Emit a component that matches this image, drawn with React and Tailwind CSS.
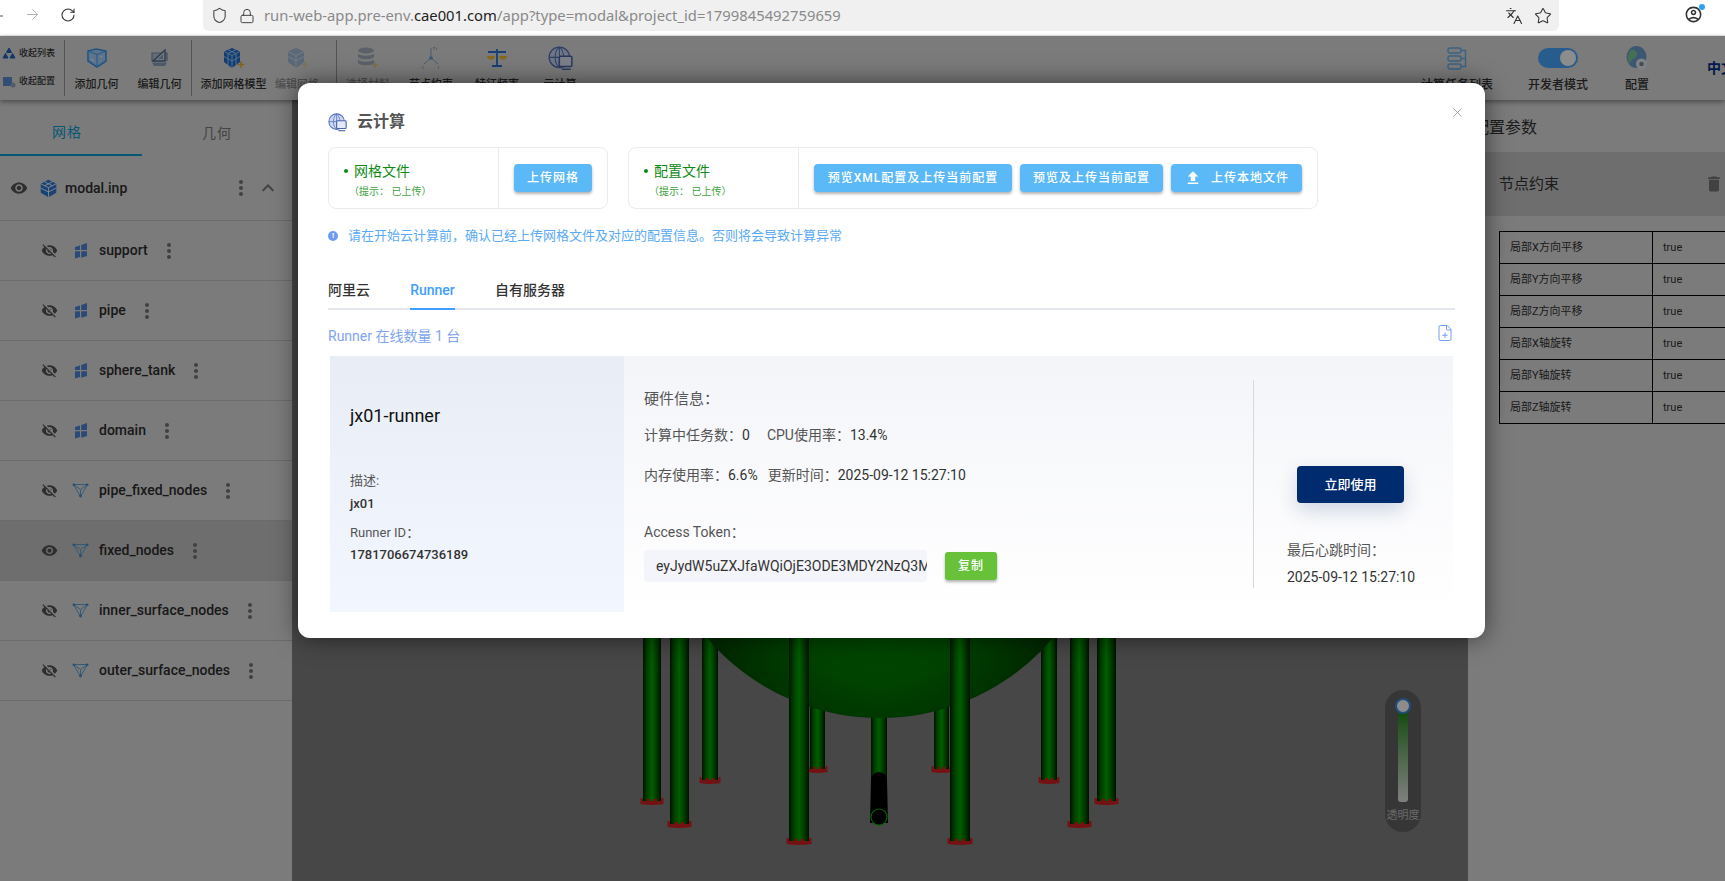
import React from 'react';
import { MdVisibility, MdVisibilityOff, MdMoreVert, MdDelete, MdExpandLess, MdFileUpload, MdOutlineAccountCircle } from 'react-icons/md';
import { ArrowRight, RotateCw, Shield, Lock, Star, Languages, X, FilePlus } from 'lucide-react';

const Pane = () => (
  <svg width="14" height="17" viewBox="0 0 14 17" className="shrink-0"><path d="M1 5 6 3.4V8H1ZM7.2 3 13 1V8H7.2ZM1 9.2H6V15L1 16.4ZM7.2 9.2H13V14L7.2 15.8Z" fill="#4f86d9" /></svg>
);
const Funnel = () => (
  <svg width="17" height="15" viewBox="0 0 17 15" className="shrink-0">
    <path d="M1.500 1.500H15.500L8.500 13.500ZM1.500 1.500 8.500 6.500 15.500 1.500M8.500 6.500V13.500" fill="none" stroke="#63a6d8" strokeWidth="1" />
    <circle cx="1.800" cy="1.800" r="1.300" fill="#4a90d0" /><circle cx="15.200" cy="1.800" r="1.300" fill="#4a90d0" /><circle cx="8.500" cy="13" r="1.400" fill="#4a90d0" />
  </svg>
);
const Cube = ({ c = '#2f78d6', size = 22 }) => (
  <svg width={size} height={size} viewBox="0 0 22 22">
    <path d="M11 1 20 5.500V16L11 21 2 16V5.500Z" fill={c} />
    <path d="M2 5.500 11 10 20 5.500M11 10V21M6.500 3.300 15.500 7.800M15.500 3.300 6.500 7.800M2 10.500 11 15 20 10.500" fill="none" stroke="#fff" strokeWidth="1" />
  </svg>
);
const Globe = ({ size = 22 }) => (
  <svg width={size} height={size} viewBox="0 0 22 22">
    <circle cx="10" cy="10" r="9" fill="#cdd8f2" stroke="#5573b8" strokeWidth="1.200" />
    <path d="M1 10H19M10 1V19M10 1C5 5 5 15 10 19M10 1C15 5 15 15 10 19" fill="none" stroke="#5573b8" strokeWidth="0.900" />
    <rect x="10" y="9" width="11" height="9" rx="1" fill="#e4e9f8" stroke="#4b66ad" strokeWidth="1.300" />
    <path d="M12 20.500H20" stroke="#4b66ad" strokeWidth="1.300" />
  </svg>
);

const ToolIcon = ({ kind }) => {
  if (kind === 'box') return (
    <svg width="20" height="20" viewBox="0 0 20 20"><path d="M1 3 9 1 19 3V13L10 19 1 13Z" fill="#a9d3fb" stroke="#3c9bf2" strokeWidth="1.600" strokeLinejoin="round" /><path d="M1 3 10 6.500 19 3M10 6.500V19" fill="none" stroke="#3c9bf2" strokeWidth="0.900" /><path d="M4 11 7 13M13 9 16 8" stroke="#eef6ff" strokeWidth="1.200" /></svg>
  );
  if (kind === 'edit') return (
    <svg width="21" height="20" viewBox="0 0 21 20"><path d="M3 13V5H18V13" fill="#b9c6d8" stroke="#7a90ad" strokeWidth="1.200" /><path d="M4 13 16 2V13Z" fill="#cfd9e6" stroke="#4e6a90" strokeWidth="1.300" /><path d="M9 11 14 6.500V11Z" fill="#8ea2bc" /><path d="M3 14.500H18L16 18H5Z" fill="#8ea2bc" /></svg>
  );
  if (kind === 'mesh') return (
    <svg width="23" height="22" viewBox="0 0 23 22"><path d="M10 1 18 4.500V15L10 21 2 15V4.500Z" fill="#1f6fd0" /><path d="M2 4.500 10 8.500 18 4.500M10 8.500V21M6 2.800 14 6.600M14 2.800 6 6.600M2 9.500 10 14 18 9.500M6 6.500V18M14 6.500V18" fill="none" stroke="#9ccdfa" strokeWidth="1" /><path d="M19 14V21M15.500 17.500H22.500" stroke="#e8b33a" strokeWidth="1.600" /></svg>
  );
  if (kind === 'meshoff') return (
    <svg width="23" height="22" viewBox="0 0 23 22" className="opacity-30"><path d="M10 1 18 4.500V15L10 21 2 15V4.500Z" fill="#1f6fd0" /><path d="M2 4.500 10 8.500 18 4.500M10 8.500V21M2 9.500 10 14 18 9.500" fill="none" stroke="#cfe6ff" strokeWidth="1" /><path d="M19 14V21M15.500 17.500H22.500" stroke="#e8b33a" strokeWidth="1.600" /></svg>
  );
  if (kind === 'db') return (
    <svg width="24" height="22" viewBox="0 0 24 22" className="opacity-50"><ellipse cx="10" cy="3.500" rx="8" ry="3" fill="#6d80a0" /><path d="M2 6.500C4 9.500 16 9.500 18 6.500V10C16 13 4 13 2 10ZM2 12.500C4 15.500 16 15.500 18 12.500V16C16 19 4 19 2 16Z" fill="#6d80a0" /><path d="M19 15V21M16 18H22" stroke="#e8b33a" strokeWidth="1.400" /></svg>
  );
  if (kind === 'fork') return (
    <svg width="22" height="24" viewBox="0 0 22 24" className="opacity-70"><path d="M11 2V12M11 12 4 18M11 12 18 18" fill="none" stroke="#6a90c0" strokeWidth="1" /><circle cx="11" cy="12" r="1.800" fill="#2f8be8" /><path d="M13 1.500H15M14 1.500V4M16.500 1.500V4M3 20V23M19 20 18 23" stroke="#778" strokeWidth="0.700" /></svg>
  );
  if (kind === 'scale') return (
    <svg width="22" height="20" viewBox="0 0 22 20"><path d="M11 1V17M6 18H16M2 4H20" fill="none" stroke="#2f72d2" strokeWidth="1.800" /><path d="M1 8H9C9 13 1 13 1 8ZM13 8H21C21 13 13 13 13 8Z" fill="#f2c230" /></svg>
  );
  if (kind === 'globe') return <Globe size={25} />;
  if (kind === 'tasks') return (
    <svg width="20" height="24" viewBox="0 0 20 24" fill="none" stroke="#6ab2ee" strokeWidth="1.400"><rect x="1" y="2" width="13" height="5" rx="2" /><rect x="1" y="10" width="13" height="5" rx="2" /><rect x="1" y="18" width="13" height="5" rx="2" /><path d="M14 4.500H18.500V20.500H14M14 12.500H18.500" /></svg>
  );
  return (
    <svg width="22" height="24" viewBox="0 0 22 24"><ellipse cx="10.500" cy="11" rx="10" ry="11" fill="#6f9ed0" /><path d="M5 4C10 3 13 8 10 11S4 14 4 18C1 14 1 8 5 4Z" fill="#7ecb9c" /><circle cx="15.500" cy="18" r="5.500" fill="#e8eef5" /><circle cx="15.500" cy="18" r="2.300" fill="#7a8aa0" /></svg>
  );
};

const Tool = ({ kind, label, w, faded, big }) => (
  <div className={`flex flex-col items-center shrink-0 ${w}`}>
    <div className="h-[28px] flex items-center justify-center"><ToolIcon kind={kind} /></div>
    <div className={`mt-[6px] leading-[14px] font-medium whitespace-nowrap ${big ? 'text-[12px]' : 'text-[11px]'} ${faded ? 'text-[#8f8f8f]' : 'text-[#333]'}`}>{label}</div>
  </div>
);

const rows = [
  { n: 'support', i: Pane }, { n: 'pipe', i: Pane }, { n: 'sphere_tank', i: Pane }, { n: 'domain', i: Pane },
  { n: 'pipe_fixed_nodes', i: Funnel }, { n: 'fixed_nodes', i: Funnel, on: true },
  { n: 'inner_surface_nodes', i: Funnel }, { n: 'outer_surface_nodes', i: Funnel },
];

const Sidebar = () => (
  <aside className="w-[292px] shrink-0 bg-[#e0e0e0] text-[14px] font-medium text-[#2e2e2e]">
    <div className="flex h-[56px] text-[14px] tracking-[1px] font-normal">
      <div className="w-[142px] flex items-center justify-center pt-[10px] pr-[8px] border-b-2 border-[#0a9ed8] text-[#0a9ed8]">网格</div>
      <div className="flex-1 flex items-center justify-center pt-[10px] text-[#7c7c7c]">几何</div>
    </div>
    <div className="h-[65px] flex items-center pl-[10px] border-b border-[#c4c4c4]">
      <MdVisibility size={18} className="text-[#555]" />
      <span className="ml-[11px]"><Cube size={19} /></span>
      <span className="ml-[7px]">modal.inp</span>
      <MdMoreVert size={24} className="ml-auto text-[#777]" />
      <MdExpandLess size={24} className="ml-[3px] mr-[12px] text-[#777]" />
    </div>
    {rows.map(r => (
      <div key={r.n} className={`h-[60px] flex items-center pl-[41px] border-b border-[#c4c4c4] ${r.on ? 'bg-[#c8c8c8]' : ''}`}>
        {r.on ? <MdVisibility size={17} className="text-[#555]" /> : <MdVisibilityOff size={17} className="text-[#555]" />}
        <span className="w-[17px] ml-[14px] flex justify-center"><r.i /></span>
        <span className="ml-[10px]">{r.n}</span>
        <MdMoreVert size={24} className="ml-[9px] text-[#777]" />
      </div>
    ))}
  </aside>
);

const legs = [
  [643, 661, 802], [702, 718, 781], [810, 825, 770], [934, 949, 770], [1041, 1057, 781], [1097, 1116, 802],
];
const front = [[670, 689, 825], [789, 809, 842], [950, 970, 842], [1070, 1089, 825]];

const Leg = ({ l, r, b, ox }) => {
  const x = l - ox, w = r - l;
  const x0 = x - 2.5, x1 = x + w + 2.5, q = (x1 - x0) / 5, top = b - 4, low = b - 1;
  return (
    <g>
      <rect x={x} y={300} width={w} height={b - 300} fill="url(#leg)" />
      <path d={`M${x0} ${top}V${b + 2}Q${(x0 + x1) / 2} ${b + 4} ${x1} ${b + 2}V${top}H${x0 + 4.5 * q}V${low}H${x0 + 3.5 * q}V${top + 1}H${x0 + 2.8 * q}V${low}H${x0 + 2.2 * q}V${top + 1}H${x0 + 1.5 * q}V${low}H${x0 + 0.5 * q}V${top}Z`} fill="#d42024" />
    </g>
  );
};

const Scene = () => {
  const ox = 292;
  return (
    <svg className="w-full h-full" viewBox="0 0 1176 781" preserveAspectRatio="none">
      <defs>
        <linearGradient id="leg" x1="0" x2="1" y1="0" y2="0">
          <stop offset="0" stopColor="#002000" /><stop offset="0.2" stopColor="#006c00" /><stop offset="0.5" stopColor="#00ac00" /><stop offset="0.8" stopColor="#006000" /><stop offset="1" stopColor="#001c00" />
        </linearGradient>
        <radialGradient id="ball" cx="0.5" cy="0.72" r="0.6">
          <stop offset="0" stopColor="#008c00" /><stop offset="0.35" stopColor="#007800" /><stop offset="0.7" stopColor="#004000" /><stop offset="1" stopColor="#001c00" />
        </radialGradient>
      </defs>
      {legs.map(([l, r, b]) => <Leg key={l} l={l} r={r} b={b - 100} ox={ox} />)}
      <rect x={871 - ox} y={500} width={16} height={180} fill="url(#leg)" />
      <path d={`M${871 - ox} 680a8 8 0 0 1 16 0l1 43h-18z`} fill="#000" />
      <circle cx={879 - ox} cy={717} r={8} fill="#000" stroke="#00b400" strokeWidth="1.200" />
      <circle cx={880 - ox} cy={391} r={227} fill="url(#ball)" />
      {front.map(([l, r, b]) => <Leg key={l} l={l} r={r} b={b - 100} ox={ox} />)}
    </svg>
  );
};

const Slider = () => (
  <div className="absolute left-[1093px] top-[590px] w-[36px] h-[142px] rounded-[18px] bg-[#636363] flex flex-col items-center">
    <div className="absolute top-[8px] w-[16px] h-[16px] rounded-full bg-[#fff] border-2 border-[#3e8be0] z-10" />
    <div className="mt-[20px] w-[10px] h-[92px] rounded-b-[3px] bg-gradient-to-b from-[#0a8a0a] to-[#e8e8e8]" />
    <div className="mt-[7px] text-[11px] leading-[14px] text-[#c0c0c0]">透明度</div>
  </div>
);

const params = ['局部X方向平移', '局部Y方向平移', '局部Z方向平移', '局部X轴旋转', '局部Y轴旋转', '局部Z轴旋转'];

const RightPanel = () => (
  <aside className="w-[257px] shrink-0 bg-[#e0e0e0] text-[#333] overflow-hidden">
    <div className="h-[52px] pl-[5px] pt-[4px] flex items-center text-[16px]">配置参数</div>
    <div className="h-[64px] bg-[#c8c8c8] pl-[31px] pr-[1px] flex items-center text-[15px]">
      节点约束
      <MdDelete size={20} className="ml-auto text-[#777]" />
    </div>
    <table className="mt-[15px] ml-[31px] w-[300px] table-fixed border-collapse text-[11px]">
      <tbody>
        {params.map(p => (
          <tr key={p} className="h-[32px]">
            <td className="w-[153px] border border-black pl-[10px] pt-[2px]">{p}</td>
            <td className="border border-black pl-[10px] pt-[2px]">true</td>
          </tr>
        ))}
      </tbody>
    </table>
  </aside>
);

const Btn = ({ children, w, icon }) => (
  <button className={`h-[28px] rounded-[4px] bg-[#5cb9f7] text-white text-[12px] font-medium tracking-[1px] flex items-center justify-center shadow-[0_2px_3px_rgba(0,0,0,0.3)] ${w}`}>
    {icon && <MdFileUpload size={18} className="mr-[9px]" />}
    {children}
  </button>
);

const FileHead = ({ t }) => (
  <div>
    <div className="text-[14px] leading-[20px] text-[#0c8a12]"><span className="inline-block w-[4px] h-[4px] rounded-full bg-[#0c8a12] mr-[6px] mb-[3px]" />{t}</div>
    <div className="mt-[4px] ml-[5px] text-[10px] leading-[14px] text-[#3f9f3f]">（提示： 已上传）</div>
  </div>
);

const Modal = () => (
  <div className="absolute left-[298px] top-[47px] w-[1187px] h-[555px] rounded-[12px] bg-white pl-[30px] pr-[30px] pt-[29px] shadow-[0_0_24px_rgba(0,0,0,0.55)] text-[#333]">
    <X size={15} strokeWidth={1.200} className="absolute left-[1152px] top-[22px] text-[#888]" />
    <div className="h-[20px] flex items-center gap-[10px]">
      <Globe size={19} />
      <span className="text-[16px] font-bold text-[#555]">云计算</span>
    </div>
    <div className="mt-[15px] flex gap-[20px]">
      <div className="w-[280px] h-[62px] rounded-[8px] border border-[#ebebeb] flex">
        <div className="w-[170px] border-r border-[#ebebeb] pl-[15px] pt-[13px]"><FileHead t="网格文件" /></div>
        <div className="flex-1 flex items-center pl-[15px]"><Btn w="w-[78px]">上传网格</Btn></div>
      </div>
      <div className="w-[690px] h-[62px] rounded-[8px] border border-[#ebebeb] flex">
        <div className="w-[170px] border-r border-[#ebebeb] pl-[15px] pt-[13px]"><FileHead t="配置文件" /></div>
        <div className="flex-1 flex items-center pl-[15px] gap-[8px]">
          <Btn w="w-[198px]">预览XML配置及上传当前配置</Btn>
          <Btn w="w-[143px]">预览及上传当前配置</Btn>
          <Btn w="w-[131px]" icon>上传本地文件</Btn>
        </div>
      </div>
    </div>
    <div className="mt-[17px] h-[20px] flex items-center text-[13px] text-[#5aaaf5]">
      <span className="w-[10px] h-[10px] rounded-full bg-[#6f9cf0] text-white text-[8px] leading-[10px] text-center font-bold mr-[10px]">!</span>
      请在开始云计算前，确认已经上传网格文件及对应的配置信息。否则将会导致计算异常
    </div>
    <div className="mt-[34px] h-[30px] border-b-2 border-[#e4e7ed] flex text-[14px] font-medium">
      <div className="w-[82px] h-[30px]">阿里云</div>
      <div className="w-[45px] h-[30px] border-b-2 border-[#409eff] text-[#409eff] text-center">Runner</div>
      <div className="ml-[40px]">自有服务器</div>
    </div>
    <div className="mt-[16px] h-[20px] flex items-center justify-between text-[14px] text-[#7fa4f0]">
      <span>Runner 在线数量 1 台</span>
      <FilePlus size={18} strokeWidth={1.300} className="mr-[1px] -mt-[6px] text-[#6f9cf0]" />
    </div>
    <div className="mt-[10px] ml-[2px] mr-[2px] h-[256px] flex bg-gradient-to-b from-[#f4f5f9] to-white text-[14px]">
      <div className="w-[294px] h-full bg-gradient-to-b from-[#e9edf5] to-[#f2f6fe] pl-[20px] text-[13px]">
        <div className="mt-[48px] h-[24px] leading-[24px] text-[18px] text-[#111]">jx01-runner</div>
        <div className="mt-[44px] leading-[18px] text-[#555]">描述:</div>
        <div className="mt-[5px] leading-[18px] font-medium">jx01</div>
        <div className="mt-[11px] leading-[18px] text-[#555]">Runner ID：</div>
        <div className="mt-[4px] leading-[18px] font-medium">1781706674736189</div>
      </div>
      <div className="w-[629px] pl-[20px] shrink-0">
        <div className="mt-[33px] h-[20px] leading-[20px] text-[15px] text-[#555]">硬件信息：</div>
        <div className="mt-[16px] h-[20px] leading-[20px] text-[#555]">计算中任务数：<span className="text-[#333]">0</span><span className="ml-[17px]">CPU使用率：</span><span className="text-[#333]">13.4%</span></div>
        <div className="mt-[20px] h-[20px] leading-[20px] text-[#555]">内存使用率：<span className="text-[#333]">6.6%</span><span className="ml-[10px]">更新时间：</span><span className="text-[#333]">2025-09-12 15:27:10</span></div>
        <div className="mt-[37px] h-[20px] leading-[20px] text-[#555]">Access Token：</div>
        <div className="mt-[8px] flex items-center">
          <div className="w-[283px] h-[32px] rounded-[4px] bg-[#f3f5fa] pl-[12px] whitespace-nowrap leading-[32px]"><div className="w-[271px] overflow-hidden">eyJydW5uZXJfaWQiOjE3ODE3MDY2NzQ3M</div></div>
          <button className="ml-[18px] w-[52px] h-[28px] rounded-[3px] bg-[#67c23a] text-white text-[12px] font-medium tracking-[1px] shadow-[0_2px_3px_rgba(0,0,0,0.3)]">复制</button>
        </div>
      </div>
      <div className="flex-1 my-[24px] border-l border-[#d8d8d8] pl-[33px]">
        <button className="ml-[10px] mt-[86px] w-[107px] h-[37px] rounded-[4px] bg-[#002b6f] text-white text-[13px] font-medium shadow-[0_8px_20px_rgba(0,43,111,0.18)]">立即使用</button>
        <div className="mt-[37px] h-[20px] leading-[20px] text-[#555]">最后心跳时间：</div>
        <div className="mt-[7px] h-[20px] leading-[20px] text-[#333] whitespace-nowrap">2025-09-12 15:27:10</div>
      </div>
    </div>
  </div>
);

export default function App() {
  return (
    <div className="w-[1725px] h-[881px] overflow-hidden font-['Roboto','Noto_Sans_CJK_SC',sans-serif] bg-white">
      <header className="h-[36px] bg-white flex items-start relative border-b border-[#e8e8e8]">
        <span className="mt-[15px] w-[3px] h-[1.500px] bg-[#aaa]" />
        <ArrowRight size={17} strokeWidth={1.300} className="ml-[21px] mt-[6px] text-[#aaa]" />
        <RotateCw size={16} strokeWidth={1.600} className="ml-[19px] mt-[7px] text-[#333]" />
        <div className="ml-[127px] w-[1356px] h-[31px] rounded-b-[6px] bg-[#f0f0f0] flex items-center pl-[8px] pr-[7px] text-[14.800px] font-['Noto_Sans',sans-serif] text-[#8a8a8a]">
          <Shield size={17} strokeWidth={1.500} className="text-[#444]" />
          <Lock size={16} strokeWidth={1.500} className="ml-[11px] text-[#444]" />
          <span className="ml-[9px] whitespace-nowrap">run-web-app.pre-env.<span className="text-[#222]">cae001.com</span>/app?type=modal&amp;project_id=1799845492759659</span>
          <Languages size={18} strokeWidth={1.500} className="ml-auto text-[#333]" />
          <Star size={18} strokeWidth={1.400} className="ml-[11px] text-[#333]" />
        </div>
        <div className="ml-[125px] mt-[5px] relative">
          <MdOutlineAccountCircle size={19} className="text-[#333]" />
          <span className="absolute -right-[2px] -top-[1px] w-[6px] h-[6px] rounded-full bg-[#2aa3f5]" />
        </div>
      </header>
      <div className="relative h-[845px]">
        <div className="h-[64px] bg-[#e0e0e0] flex items-center shadow-[0_2px_5px_rgba(0,0,0,0.4)] relative z-10">
          <div className="w-[65px] shrink-0 h-[56px] border-r border-[#999] flex flex-col justify-around pl-[2px] text-[9px] font-medium text-[#333]">
            <div className="flex items-center gap-[3px]"><svg width="14" height="13" viewBox="0 0 14 13"><path d="M7 1 9.500 5.500H4.500ZM3.500 6.500 6 11H1ZM10.500 6.500 13 11H8Z" fill="#2563b8" stroke="#2563b8" strokeLinejoin="round" /></svg>收起列表</div>
            <div className="flex items-center gap-[3px]"><svg width="14" height="14" viewBox="0 0 14 14"><rect x="1" y="2" width="9" height="9" fill="#5d8fd2" /><circle cx="11" cy="10" r="2.500" fill="#9aa8c0" /></svg>收起配置</div>
          </div>
          <div className="flex w-[127px] shrink-0 h-[56px] items-center border-r border-[#999]">
            <Tool kind="box" label="添加几何" w="w-[63px]" />
            <Tool kind="edit" label="编辑几何" w="w-[63px]" />
          </div>
          <div className="flex w-[145px] shrink-0 h-[56px] items-center border-r border-[#999] pl-[8px] gap-[8px]">
            <Tool kind="mesh" label="添加网格模型" w="w-[67px]" />
            <Tool kind="meshoff" label="编辑网格" w="w-[44px]" faded />
          </div>
          <Tool kind="db" label="选择材料" w="w-[62px]" faded />
          <Tool kind="fork" label="节点约束" w="w-[64px]" />
          <Tool kind="scale" label="特征频率" w="w-[68px]" />
          <Tool kind="globe" label="云计算" w="w-[58px]" />
          <div className="ml-auto flex items-center shrink-0">
            <Tool kind="tasks" label="计算任务列表" w="w-[80px]" big />
            <div className="w-[122px] flex flex-col items-center">
              <div className="h-[28px] flex items-center"><div className="w-[40px] h-[20px] rounded-full bg-[#4aa8ff] relative"><span className="absolute right-[2px] top-[2px] w-[16px] h-[16px] rounded-full bg-white" /></div></div>
              <div className="mt-[6px] text-[12px] leading-[14px] font-medium text-[#333] whitespace-nowrap">开发者模式</div>
            </div>
            <Tool kind="cfg" label="配置" w="w-[36px]" big />
            <div className="ml-[52px] w-[18px] overflow-hidden whitespace-nowrap text-[14px] font-bold text-[#00308a]">中文</div>
          </div>
        </div>
        <div className="flex h-[781px]">
          <Sidebar />
          <main className="flex-1 bg-[#818181] relative overflow-hidden"><Scene /><Slider /></main>
          <RightPanel />
        </div>
        <div className="absolute inset-0 z-20 bg-black/45" />
        <div className="absolute inset-0 z-30"><Modal /></div>
      </div>
    </div>
  );
}
